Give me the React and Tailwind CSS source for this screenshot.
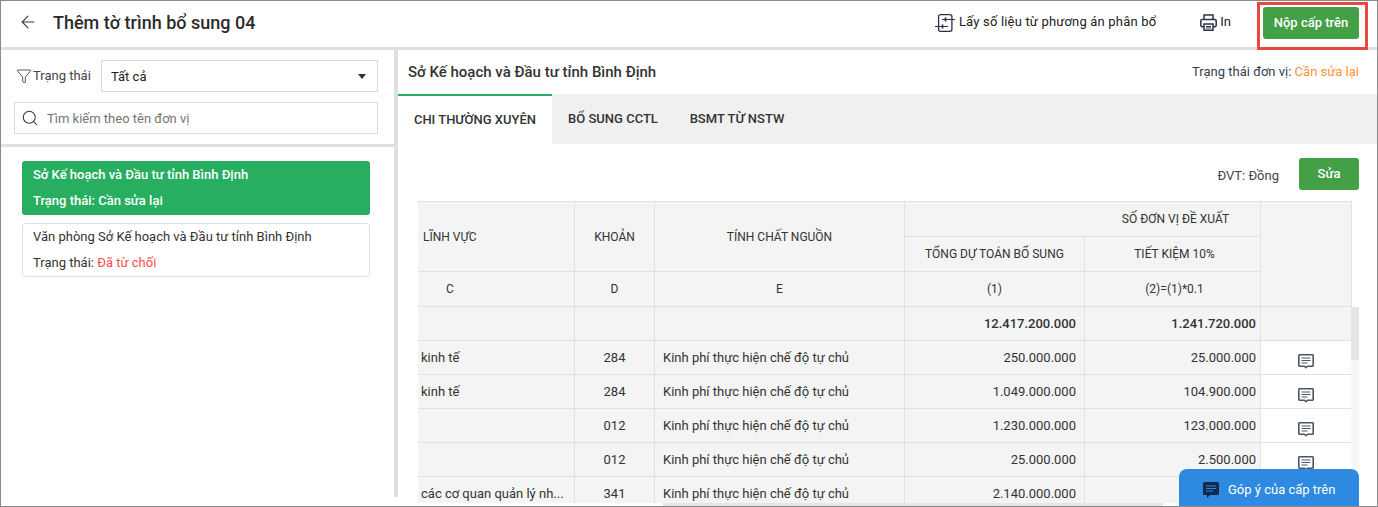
import { ArrowLeft, Funnel, Search } from "lucide-react";

const rows = [
  { linhVuc: "kinh tế", khoan: "284", tong: "250.000.000", tietKiem: "25.000.000" },
  { linhVuc: "kinh tế", khoan: "284", tong: "1.049.000.000", tietKiem: "104.900.000" },
  { linhVuc: "", khoan: "012", tong: "1.230.000.000", tietKiem: "123.000.000" },
  { linhVuc: "", khoan: "012", tong: "25.000.000", tietKiem: "2.500.000" },
  { linhVuc: "các cơ quan quản lý nh...", khoan: "341", tong: "2.140.000.000", tietKiem: "" },
];

const cell = "border border-[#e0e0e6] align-middle";
const grayCell = `${cell} bg-[#f4f4f4]`;
const firstCell = `${grayCell} border-l-[#f4f4f4]`;

function CommentIcon() {
  return (
    <svg width="16" height="15" viewBox="0 0 16 15" fill="none" className="inline-block">
      <path d="M1.5.8h13a.7.7 0 0 1 .7.7v10a.7.7 0 0 1-.7.7H9.5L8 13.7l-1.5-1.5h-5a.7.7 0 0 1-.7-.7v-10a.7.7 0 0 1 .7-.7z" stroke="#4a5468" strokeWidth="1.6" />
      <path d="M3.5 4h9M3.5 6.5h9M3.5 9h6" stroke="#4a5468" strokeWidth="1.2" />
    </svg>
  );
}

function DataIcon() {
  return (
    <svg width="20" height="18" viewBox="0 0 20 18" fill="none" className="mt-[2px]">
      <rect x="3.6" y="0.7" width="13.3" height="16.6" rx="2" stroke="#2b3445" strokeWidth="1.3" />
      <path d="M7 5.5h13M0 12.5h13" stroke="#2b3445" strokeWidth="1.1" />
      <path d="M10.5 3.5v4M7.5 10.5v4" stroke="#2b3445" strokeWidth="1.8" />
    </svg>
  );
}

function PrintIcon() {
  return (
    <svg width="17" height="17" viewBox="0 0 17 17" fill="none">
      <path d="M4 5.5V1h9v4.5" stroke="#2b3445" strokeWidth="1.5" />
      <rect x="0.8" y="5.5" width="15.4" height="7.2" rx="1.5" stroke="#2b3445" strokeWidth="1.5" />
      <rect x="4" y="10" width="9" height="6.2" fill="#fff" stroke="#2b3445" strokeWidth="1.5" />
      <path d="M6 12.5h5M6 14h5" stroke="#2b3445" />
    </svg>
  );
}

export default function App() {
  return (
    <div className="relative flex h-[507px] w-full flex-col overflow-hidden border border-[#8a8a8a] bg-white font-['Roboto',sans-serif] text-[13px] text-[#212121]">
      {/* Header */}
      <div className="box-content flex h-[42px] shrink-0 items-center border-b-[3px] border-[#e0e0e0] pb-[4px]">
        <ArrowLeft className="ml-[17px] h-[20px] w-[20px] text-[#333c4e]" strokeWidth={1.3} />
        <h1 className="ml-[15px] text-[18px] font-medium text-[#2b2b2b]">Thêm tờ trình bổ sung 04</h1>
        <div className="ml-auto flex items-center gap-[4px] tracking-[0.18px]">
          <DataIcon />
          <span>Lấy số liệu từ phương án phân bổ</span>
        </div>
        <div className="ml-[44px] flex items-center gap-[3px]">
          <PrintIcon />
          <span>In</span>
        </div>
        <div className="ml-[26px] mr-[9px] mt-[1px] h-[48px] self-start border-[3px] border-[#e8493f] pl-[3px] pr-[6px] pt-[2px]">
          <button className="h-[32px] w-[96px] rounded-[3px] bg-[#43a047] text-[13px] font-medium text-white">Nộp cấp trên</button>
        </div>
      </div>

      <div className="flex min-h-0 flex-1">
        {/* Left panel */}
        <div className="box-content h-[447px] w-[393px] shrink-0 self-start border-r-[4px] border-[#e0e0e0]">
          <div className="flex items-center pl-[15px] pr-[16px] pt-[10px]">
            <Funnel className="h-[16px] w-[16px] text-[#333c4e]" strokeWidth={1.3} />
            <span className="ml-[1px] w-[68px] text-[#444]">Trạng thái</span>
            <div className="flex h-[32px] flex-1 items-center justify-between border border-[#dcdcdc] pl-[9px] pr-[11px]">
              <span className="mt-[1px]">Tất cả</span>
              <span className="h-0 w-0 border-x-[4px] border-t-[5px] border-x-transparent border-t-[#2b3445]" />
            </div>
          </div>
          <div className="ml-[13px] mr-[16px] mt-[10px] flex h-[32px] items-center border border-[#dcdcdc] pl-[6px]">
            <Search className="h-[18px] w-[18px] text-[#333c4e]" strokeWidth={1.4} />
            <span className="ml-[8px] mt-[1px] text-[#757575]">Tìm kiếm theo tên đơn vị</span>
          </div>
          <div className="mt-[10px] h-[3px] bg-[#e0e0e0]" />
          <div className="flex flex-col gap-[8px] pl-[21px] pr-[24px] pt-[14px]">
            <div className="flex h-[54px] flex-col justify-between rounded-[3px] bg-[#27ae60] px-[11px] pb-[5px] pt-[4px] font-medium text-white">
              <div>Sở Kế hoạch và Đầu tư tỉnh Bình Định</div>
              <div>Trạng thái: Cần sửa lại</div>
            </div>
            <div className="flex h-[54px] flex-col justify-between rounded-[3px] border border-[#e0e0e0] px-[10px] pb-[4px] pt-[3px] text-[#333]">
              <div>Văn phòng Sở Kế hoạch và Đầu tư tỉnh Bình Định</div>
              <div>
                Trạng thái: <span className="text-[#ff4d4f]">Đã từ chối</span>
              </div>
            </div>
          </div>
        </div>

        {/* Right panel */}
        <div className="flex min-w-0 flex-1 flex-col">
          <div className="flex h-[44px] shrink-0 items-center justify-between pl-[10px] pr-[18px]">
            <span className="text-[15px] font-medium text-[#333]">Sở Kế hoạch và Đầu tư tỉnh Bình Định</span>
            <span className="text-[#333c4e]">
              Trạng thái đơn vị: <span className="text-[#ff9233]">Cần sửa lại</span>
            </span>
          </div>
          <div className="flex h-[50px] shrink-0 bg-[#f0f0f0] text-[13px] font-medium text-[#333]">
            <div className="flex w-[154px] items-center justify-center border-t-2 border-[#27ae60] bg-white">CHI THƯỜNG XUYÊN</div>
            <div className="flex w-[122px] items-center justify-center">BỔ SUNG CCTL</div>
            <div className="ml-[1px] flex w-[124px] items-center justify-center">BSMT TỪ NSTW</div>
          </div>
          <div className="flex h-[57px] shrink-0 items-start justify-end pr-[18px] pt-[14px]">
            <span className="mr-[20px] mt-[8px] text-[#444]">ĐVT: Đồng</span>
            <button className="h-[32px] w-[60px] rounded-[3px] bg-[#43a047] font-medium text-white">Sửa</button>
          </div>

          {/* Table */}
          <div className="relative mb-[3px] ml-[20px] mr-[18px] min-h-0 flex-1 overflow-hidden">
            <table className="w-[933px] table-fixed border-collapse text-[#333]">
              <colgroup>
                <col className="w-[156px]" />
                <col className="w-[80px]" />
                <col className="w-[250px]" />
                <col className="w-[180px]" />
                <col className="w-[176px]" />
                <col className="w-[91px]" />
              </colgroup>
              <thead className="text-[12px]">
                <tr className="h-[35px]">
                  <th rowSpan={2} className={`${firstCell} pl-[4px] text-left font-normal`}>LĨNH VỰC</th>
                  <th rowSpan={2} className={`${grayCell} font-normal`}>KHOẢN</th>
                  <th rowSpan={2} className={`${grayCell} font-normal`}>TÍNH CHẤT NGUỒN</th>
                  <th colSpan={2} className={`${grayCell} pl-[186px] font-normal`}>SỐ ĐƠN VỊ ĐỀ XUẤT</th>
                  <th rowSpan={3} className={grayCell} />
                </tr>
                <tr className="h-[35px]">
                  <th className={`${grayCell} font-normal`}>TỔNG DỰ TOÁN BỔ SUNG</th>
                  <th className={`${grayCell} pl-[4px] font-normal`}>TIẾT KIỆM 10%</th>
                </tr>
                <tr className="h-[35px]">
                  <th className={`${firstCell} pl-[27px] text-left font-normal`}>C</th>
                  <th className={`${grayCell} font-normal`}>D</th>
                  <th className={`${grayCell} font-normal`}>E</th>
                  <th className={`${grayCell} font-normal`}>(1)</th>
                  <th className={`${grayCell} pl-[4px] font-normal`}>(2)=(1)*0.1</th>
                </tr>
              </thead>
              <tbody>
                <tr className="h-[34px] font-medium">
                  <td className={firstCell} />
                  <td className={grayCell} />
                  <td className={grayCell} />
                  <td className={`${grayCell} pr-[8px] text-right`}>12.417.200.000</td>
                  <td className={`${grayCell} pr-[4px] text-right`}>1.241.720.000</td>
                  <td className={grayCell} />
                </tr>
                {rows.map((row, index) => (
                  <tr key={index} className="h-[34px]">
                    <td className={`${firstCell} pl-[2px]`}>{row.linhVuc}</td>
                    <td className={`${grayCell} text-center`}>{row.khoan}</td>
                    <td className={`${grayCell} pl-[8px]`}>Kinh phí thực hiện chế độ tự chủ</td>
                    <td className={`${grayCell} pr-[8px] text-right`}>{row.tong}</td>
                    <td className={`${grayCell} pr-[4px] text-right`}>{row.tietKiem}</td>
                    <td className={`${cell} pt-[7px] text-center`}>
                      {index < 4 && <CommentIcon />}
                    </td>
                  </tr>
                ))}
              </tbody>
            </table>
          </div>
        </div>
      </div>

      {/* Scrollbars */}
      <div className="absolute left-[1350px] top-[306px] h-[195px] w-[8px] bg-[#f7f7f7]">
        <div className="h-[53px] bg-[#e6e6e6]" />
      </div>
      <div className="absolute bottom-0 left-[662px] h-[3px] w-[500px] bg-[#e6e6e6]" />

      {/* Floating feedback button */}
      <div className="absolute bottom-0 left-[1178px] flex h-[37px] w-[180px] items-center rounded-t-[8px] bg-[#2e8ae0] pl-[24px] pt-[4px] text-white">
        <svg width="16" height="16" viewBox="0 0 16 16" className="mt-[1px]">
          <path d="M1.5 0h13A1.5 1.5 0 0 1 16 1.5v10a1.5 1.5 0 0 1-1.5 1.5H7l-3 3v-3H1.5A1.5 1.5 0 0 1 0 11.5v-10A1.5 1.5 0 0 1 1.5 0z" fill="#12294d" />
          <path d="M3 4h10M3 6.5h10M3 9h7" stroke="#2e8ae0" strokeWidth="1.1" />
        </svg>
        <span className="ml-[9px]">Góp ý của cấp trên</span>
      </div>
    </div>
  );
}
